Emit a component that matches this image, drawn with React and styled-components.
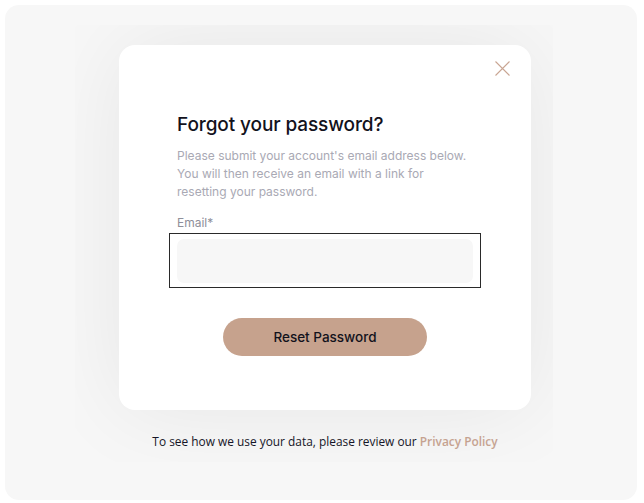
import React, { useState } from "react";
import styled, { createGlobalStyle } from "styled-components";

const GlobalStyle = createGlobalStyle`
  body {
    margin: 0;
    background: #ffffff;
    font-family: "Inter", "Noto Sans", sans-serif;
  }
`;

const Page = styled.div`
  margin: 5px 7px 3px 5px;
  height: 495px;
  background: #f7f7f7;
  border-radius: 14px;
  padding-top: 20px;
  box-sizing: border-box;
`;

const ShadowZone = styled.div`
  margin-left: 70px;
  width: 478px;
  height: 437px;
  padding: 20px 22px 0 44px;
  box-sizing: border-box;
  overflow: hidden;
  display: flex;
  flex-direction: column;
  align-items: center;
`;

const Card = styled.div`
  position: relative;
  width: 412px;
  height: 365px;
  background: #ffffff;
  border-radius: 16px;
  box-shadow: 0 0 90px rgba(0, 0, 0, 0.07);
  padding: 68px 50px 0 50px;
  box-sizing: border-box;
  flex-shrink: 0;
`;

const CloseButton = styled.button`
  position: absolute;
  top: 11px;
  right: 17px;
  width: 24px;
  height: 24px;
  padding: 0;
  border: none;
  background: none;
  cursor: pointer;
  display: flex;
  align-items: center;
  justify-content: center;
`;

const Title = styled.h2`
  margin: 0 0 11px 8px;
  font-size: 19px;
  font-weight: 500;
  color: #12121c;
  letter-spacing: -0.1px;
`;

const Description = styled.p`
  margin: 0 0 14px 8px;
  font-size: 12px;
  line-height: 18px;
  color: #a9a9b4;
  font-weight: 400;
`;

const Label = styled.label`
  display: block;
  margin: 0 0 3px 8px;
  font-size: 12px;
  color: #8f8f9a;
`;

const FieldFrame = styled.div`
  border: 1px solid #2a2a2a;
  padding: 5px 7px 4px 7px;
`;

const Input = styled.input`
  display: block;
  width: 100%;
  height: 44px;
  box-sizing: border-box;
  border: none;
  border-radius: 7px;
  background: #f7f7f7;
  padding: 0 14px;
  font-family: inherit;
  font-size: 13px;
  outline: none;
`;

const ButtonRow = styled.div`
  display: flex;
  justify-content: center;
  margin-top: 30px;
`;

const ResetButton = styled.button`
  width: 204px;
  height: 38px;
  border: none;
  border-radius: 19px;
  background: #c6a28d;
  color: #12121c;
  font-family: "Inter", "Noto Sans", sans-serif;
  font-size: 13.5px;
  font-weight: 500;
  cursor: pointer;
`;

const Footer = styled.p`
  margin: 23px 0 0 0;
  font-family: "Open Sans", "Noto Sans", sans-serif;
  font-size: 11.9px;
  color: #161628;
  white-space: nowrap;
`;

const PolicyLink = styled.a`
  color: #c9a593;
  font-weight: 600;
  text-decoration: none;
`;

const CloseIcon = () => (
  <svg width="15" height="15" viewBox="0 0 15 15">
    <path d="M0.5 0.5 L14.5 14.5 M14.5 0.5 L0.5 14.5" stroke="#c9a593" strokeWidth="1.1" fill="none" />
  </svg>
);

const App = () => {
  const [email, setEmail] = useState("");

  return (
    <>
      <GlobalStyle />
      <Page>
        <ShadowZone>
          <Card>
            <CloseButton aria-label="Close">
              <CloseIcon />
            </CloseButton>
            <Title>Forgot your password?</Title>
            <Description>
              Please submit your account's email address below.
              <br />
              You will then receive an email with a link for
              <br />
              resetting your password.
            </Description>
            <Label htmlFor="email">Email*</Label>
            <FieldFrame>
              <Input
                id="email"
                type="email"
                value={email}
                onChange={e => setEmail(e.target.value)}
              />
            </FieldFrame>
            <ButtonRow>
              <ResetButton type="button">Reset Password</ResetButton>
            </ButtonRow>
          </Card>
          <Footer>
            To see how we use your data, please review our{" "}
            <PolicyLink href="#">Privacy Policy</PolicyLink>
          </Footer>
        </ShadowZone>
      </Page>
    </>
  );
};

export default App;
